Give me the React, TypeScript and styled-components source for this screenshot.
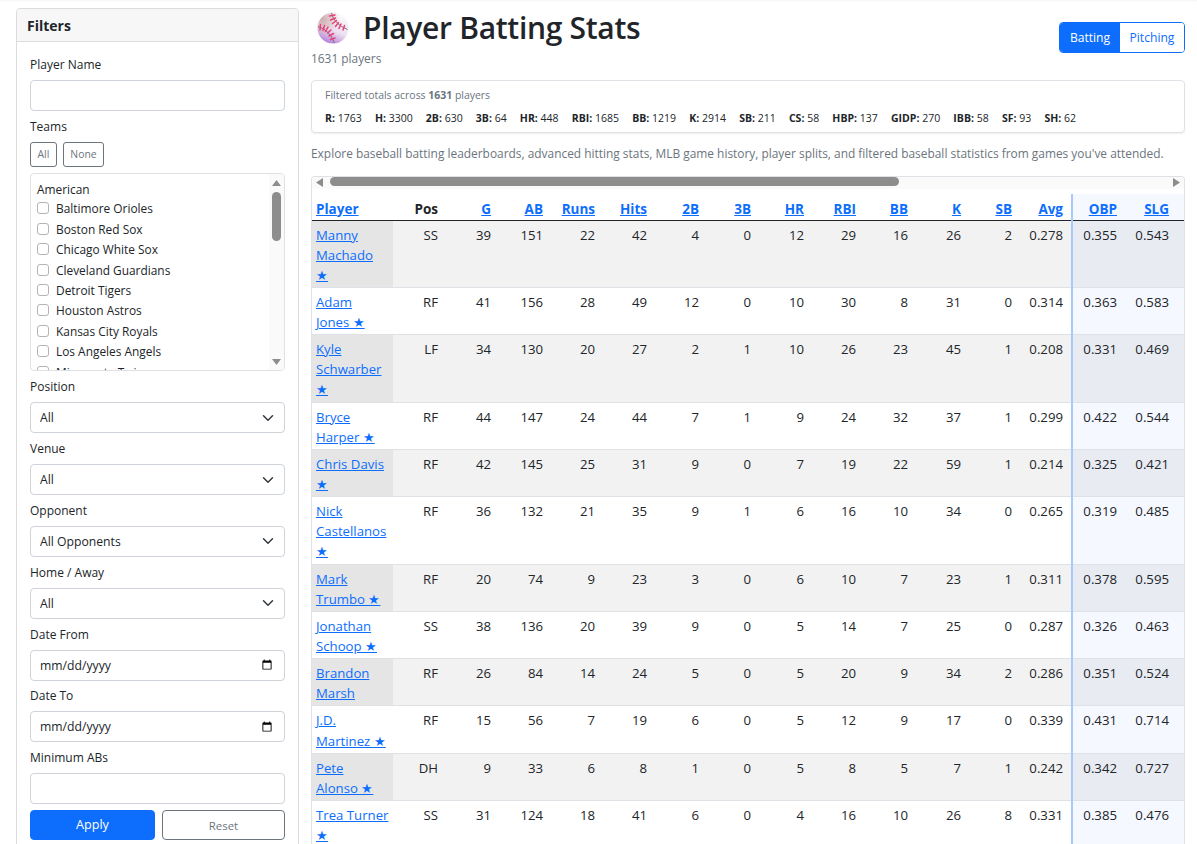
import React from 'react'
import styled, { createGlobalStyle } from 'styled-components'

const FONT = '"Open Sans", "Noto Sans", sans-serif'
const BLUE = '#0d6efd'
const GREY = '#6c757d'

const GlobalStyle = createGlobalStyle`
    html, body {
        margin: 0;
        height: 100%;
        overflow: hidden;
        background: #fff;
    }
    body {
        font-family: ${FONT};
        font-size: 13px;
        color: #212529;
    }
    * {
        box-sizing: border-box;
    }
`

const Page = styled.div`
    display: grid;
    grid-template-columns: 283px 874px;
    column-gap: 12px;
    padding: 8px 12px 0 16px;
    height: 844px;
    overflow: hidden;
    box-shadow: inset 0 2px 2px -1px #f4f4f4;
`

/* sidebar */
const Sidebar = styled.aside`
    border: 1px solid #dcdcdc;
    border-radius: 4px;
    height: 900px;
`

const SidebarHeader = styled.div`
    height: 33px;
    padding: 0 10px;
    display: flex;
    align-items: center;
    background: #f7f7f7;
    border-bottom: 1px solid #dcdcdc;
    border-radius: 4px 4px 0 0;
    font-size: 14px;
    font-weight: 700;
`

const SidebarBody = styled.div`
    padding: 13px 13px 0;
`

const Field = styled.div`
    margin-bottom: 5.8px;
`

const Label = styled.label`
    display: block;
    height: 19px;
    line-height: 19px;
    margin-bottom: 6px;
    font-size: 12px;
`

const TextInput = styled.input`
    display: block;
    width: 100%;
    height: 31px;
    padding: 0 9px;
    border: 1px solid #ced4da;
    border-radius: 4px;
    background: #fff;
    font-family: ${FONT};
    font-size: 12.2px;
    color: #212529;
    outline: none;

    &::-webkit-datetime-edit-fields-wrapper,
    &::-webkit-datetime-edit-month-field,
    &::-webkit-datetime-edit-day-field,
    &::-webkit-datetime-edit-year-field,
    &::-webkit-datetime-edit-text {
        padding: 0;
    }
`

const Select = styled.select`
    display: block;
    width: 100%;
    height: 31px;
    padding: 0 30px 0 9px;
    appearance: none;
    border: 1px solid #ced4da;
    border-radius: 4px;
    background-color: #fff;
    background-image: url("data:image/svg+xml,%3csvg xmlns='http://www.w3.org/2000/svg' viewBox='0 0 16 16'%3e%3cpath fill='none' stroke='%23343a40' stroke-linecap='round' stroke-linejoin='round' stroke-width='2' d='m2 5 6 6 6-6'/%3e%3c/svg%3e");
    background-repeat: no-repeat;
    background-position: right 10px center;
    background-size: 12px 12px;
    font-family: ${FONT};
    font-size: 12.2px;
    color: #212529;
`

const MiniButtons = styled.div`
    display: flex;
    gap: 6px;
    margin-bottom: 6px;
`

const MiniButton = styled.button`
    height: 25px;
    padding: 0 6.5px;
    border: 1px solid ${GREY};
    border-radius: 3px;
    background: #fff;
    color: ${GREY};
    font-family: ${FONT};
    font-size: 10.4px;
`

const TeamBox = styled.div`
    display: flex;
    height: 198px;
    margin-bottom: 6.6px;
    border: 1px solid #dee2e6;
    border-radius: 4px;
    overflow: hidden;
`

const TeamList = styled.div`
    flex: 1;
    padding: 6px 6px 0;
    overflow: hidden;
`

const TeamGroup = styled.div`
    height: 18.3px;
    line-height: 18px;
    font-size: 11.9px;
`

const TeamRow = styled.label`
    display: flex;
    align-items: center;
    gap: 7px;
    height: 20.43px;
    font-size: 11.9px;
    white-space: nowrap;
`

const TeamCheck = styled.span`
    flex: none;
    width: 12px;
    height: 12px;
    border: 1px solid #b4b4b4;
    border-radius: 3px;
    background: #fff;
`

const TeamScroll = styled.div`
    flex: none;
    width: 15px;
    padding: 6px 3px 5px;
    display: flex;
    flex-direction: column;
    align-items: center;
    background: #fafafa;
`

const TeamThumb = styled.div`
    width: 9px;
    height: 49px;
    margin-top: 6px;
    border-radius: 5px;
    background: #8d8d8d;
`

const ArrowDownWrap = styled.div`
    margin-top: auto;
    line-height: 0;
`

const SubmitRow = styled.div`
    display: grid;
    grid-template-columns: 125px 123px;
    column-gap: 7px;
`

const ApplyButton = styled.button`
    height: 30px;
    border: 1px solid ${BLUE};
    border-radius: 4px;
    background: ${BLUE};
    color: #fff;
    font-family: ${FONT};
    font-size: 12.6px;
    font-weight: 500;
`

const ResetButton = styled.button`
    height: 30px;
    padding-top: 2px;
    border: 1px solid ${GREY};
    border-radius: 4px;
    background: #fff;
    color: ${GREY};
    font-family: ${FONT};
    font-size: 11.4px;
`

/* main */
const Main = styled.main`
    min-width: 0;
`

const TopBar = styled.div`
    display: flex;
    justify-content: space-between;
    align-items: flex-start;
`

const Title = styled.h1`
    display: flex;
    align-items: center;
    margin: 0;
    height: 39px;
    font-size: 30px;
    font-weight: 600;
    line-height: 39px;
    letter-spacing: -0.3px;
`

const Ball = styled.svg`
    width: 32px;
    height: 32px;
    margin: 1px 14px 0 6px;
`

const Players = styled.div`
    height: 21px;
    line-height: 23px;
    font-size: 11.9px;
    color: ${GREY};
`

const ModeGroup = styled.div`
    display: flex;
    margin-top: 14px;
    height: 31px;
    border: 1px solid ${BLUE};
    border-radius: 4px;
    overflow: hidden;
`

const ModeButton = styled.button`
    width: ${p => p.$w}px;
    padding: 0;
    border: 0;
    background: ${p => (p.$active ? BLUE : '#fff')};
    color: ${p => (p.$active ? '#fff' : BLUE)};
    font-family: ${FONT};
    font-size: 12.1px;
`

const TotalsCard = styled.div`
    height: 53px;
    margin-top: 12px;
    padding: 6px 13px 0;
    border: 1px solid #dee2e6;
    border-radius: 4px;
    box-shadow: 0 1px 2px rgba(0, 0, 0, 0.07);
`

const TotalsTitle = styled.div`
    height: 17px;
    line-height: 17px;
    font-size: 10.45px;
    color: ${GREY};
`

const TotalsRow = styled.div`
    display: flex;
    gap: 13.2px;
    margin-top: 6px;
    line-height: 17px;
    font-size: 10.5px;
`

const Intro = styled.p`
    margin: 10px 0 13px;
    height: 20px;
    line-height: 20px;
    font-size: 11.92px;
    color: ${GREY};
    white-space: nowrap;
`

const TableBox = styled.div`
    border: 1px solid #dee2e6;
    border-bottom: 0;
    border-radius: 4px 4px 0 0;
    overflow: hidden;
`

const ScrollTrack = styled.div`
    display: flex;
    align-items: flex-start;
    height: 12px;
    padding: 1px 4px 0;
    margin-bottom: 5px;
    background: #fafafa;
`

const ScrollThumb = styled.div`
    width: 569px;
    height: 9px;
    margin-top: -1px;
    margin-left: 7px;
    border-radius: 5px;
    background: #8d8d8d;
`

const RightArrowWrap = styled.div`
    margin-left: auto;
    line-height: 0;
`

const Table = styled.table`
    table-layout: fixed;
    width: 924px;
    border-collapse: collapse;
    font-size: 13.2px;
    line-height: 20.14px;
`

const Th = styled.th`
    height: 26px;
    padding: 4px ${p => p.$pr ?? 4}px 0 4px;
    text-align: ${p => (p.$left ? 'left' : 'right')};
    border-bottom: 1px solid #212529;
    font-size: 13.5px;
    font-weight: 700;
    background: ${p => (p.$rate ? '#f5f8ff' : '#fff')};
    ${p => p.$first && 'border-left: 2px solid #a8c9fc;'}

    a {
        color: ${BLUE};
    }
`

const Td = styled.td`
    padding: 4px ${p => p.$pr ?? 4}px 2px 4px;
    text-align: right;
    vertical-align: top;
    border-bottom: 1px solid #dee2e6;
    background: ${p => (p.$rate ? (p.$odd ? '#e8ebf2' : '#f5f8ff') : p.$odd ? '#f2f2f2' : '#fff')};
    ${p => p.$first && 'border-left: 2px solid #a8c9fc;'}
`

const NameCell = styled.td`
    padding: 4px 4px 2px;
    text-align: left;
    vertical-align: top;
    border-bottom: 1px solid #dee2e6;
    background: ${p => (p.$odd ? '#e5e5e5' : '#fff')};
    white-space: nowrap;

    a {
        color: ${BLUE};
    }
`

const widths = [81, 49, 53, 52, 52, 52, 52, 52, 53, 52, 52, 53, 51, 56, 49, 52, 52]

const teams = [
    'Baltimore Orioles', 'Boston Red Sox', 'Chicago White Sox', 'Cleveland Guardians', 'Detroit Tigers',
    'Houston Astros', 'Kansas City Royals', 'Los Angeles Angels', 'Minnesota Twins',
]

const totals: [string, number][] = [
    ['R', 1763], ['H', 3300], ['2B', 630], ['3B', 64], ['HR', 448], ['RBI', 1685], ['BB', 1219], ['K', 2914],
    ['SB', 211], ['CS', 58], ['HBP', 137], ['GIDP', 270], ['IBB', 58], ['SF', 93], ['SH', 62],
]

const headers = ['G', 'AB', 'Runs', 'Hits', '2B', '3B', 'HR', 'RBI', 'BB', 'K', 'SB', 'Avg']

type Player = { name: string[]; pos: string; stats: (number | string)[]; obp: string; slg: string }

const players: Player[] = [
    { name: ['Manny', 'Machado', '★'], pos: 'SS', stats: [39, 151, 22, 42, 4, 0, 12, 29, 16, 26, 2, '0.278'], obp: '0.355', slg: '0.543' },
    { name: ['Adam', 'Jones ★'], pos: 'RF', stats: [41, 156, 28, 49, 12, 0, 10, 30, 8, 31, 0, '0.314'], obp: '0.363', slg: '0.583' },
    { name: ['Kyle', 'Schwarber', '★'], pos: 'LF', stats: [34, 130, 20, 27, 2, 1, 10, 26, 23, 45, 1, '0.208'], obp: '0.331', slg: '0.469' },
    { name: ['Bryce', 'Harper ★'], pos: 'RF', stats: [44, 147, 24, 44, 7, 1, 9, 24, 32, 37, 1, '0.299'], obp: '0.422', slg: '0.544' },
    { name: ['Chris Davis', '★'], pos: 'RF', stats: [42, 145, 25, 31, 9, 0, 7, 19, 22, 59, 1, '0.214'], obp: '0.325', slg: '0.421' },
    { name: ['Nick', 'Castellanos', '★'], pos: 'RF', stats: [36, 132, 21, 35, 9, 1, 6, 16, 10, 34, 0, '0.265'], obp: '0.319', slg: '0.485' },
    { name: ['Mark', 'Trumbo ★'], pos: 'RF', stats: [20, 74, 9, 23, 3, 0, 6, 10, 7, 23, 1, '0.311'], obp: '0.378', slg: '0.595' },
    { name: ['Jonathan', 'Schoop ★'], pos: 'SS', stats: [38, 136, 20, 39, 9, 0, 5, 14, 7, 25, 0, '0.287'], obp: '0.326', slg: '0.463' },
    { name: ['Brandon', 'Marsh'], pos: 'RF', stats: [26, 84, 14, 24, 5, 0, 5, 20, 9, 34, 2, '0.286'], obp: '0.351', slg: '0.524' },
    { name: ['J.D.', 'Martinez ★'], pos: 'RF', stats: [15, 56, 7, 19, 6, 0, 5, 12, 9, 17, 0, '0.339'], obp: '0.431', slg: '0.714' },
    { name: ['Pete', 'Alonso ★'], pos: 'DH', stats: [9, 33, 6, 8, 1, 0, 5, 8, 5, 7, 1, '0.242'], obp: '0.342', slg: '0.727' },
    { name: ['Trea Turner', '★'], pos: 'SS', stats: [31, 124, 18, 41, 6, 0, 4, 16, 10, 26, 8, '0.331'], obp: '0.385', slg: '0.476' },
]

const Triangle = ({ dir }: { dir: 'up' | 'down' | 'left' | 'right' }) => {
    const points = {
        up: '0,6 4.5,0 9,6',
        down: '0,0 9,0 4.5,6',
        left: '7,0 7,9 0,4.5',
        right: '0,0 7,4.5 0,9',
    }[dir]
    const vertical = dir === 'up' || dir === 'down'
    return (
        <svg width={vertical ? 9 : 7} height={vertical ? 6 : 9} style={{ flex: 'none' }}>
            <polygon points={points} fill="#8d8d8d" />
        </svg>
    )
}

const BaseballIcon = () => (
    <Ball viewBox="0 0 32 32">
        <defs>
            <linearGradient id="ballBase" x1="0.7" y1="0.05" x2="0.3" y2="1">
                <stop offset="0" stopColor="#fbf9fa" />
                <stop offset="0.55" stopColor="#ece0f0" />
                <stop offset="1" stopColor="#b27cd6" />
            </linearGradient>
            <radialGradient id="ballShade" cx="0.15" cy="0.2" r="0.55">
                <stop offset="0" stopColor="#c4a3a0" stopOpacity="0.85" />
                <stop offset="1" stopColor="#c4a3a0" stopOpacity="0" />
            </radialGradient>
        </defs>
        <circle cx="16" cy="16" r="15.5" fill="url(#ballBase)" />
        <circle cx="16" cy="16" r="15.5" fill="url(#ballShade)" />
        <path d="M14.5 1 Q17 12 30.5 17.5" fill="none" stroke="#6b5560" strokeWidth="0.8" />
        <path d="M1 14.5 Q12 17.5 17.5 31" fill="none" stroke="#6b5560" strokeWidth="0.8" />
        <path
            d="M12.5 4 L18 3 M13.5 8 L18.5 6 M15.5 11.5 L19.5 8.5 M18.5 14.5 L21.5 10.5 M22 16.5 L24 12 M26 18 L27.5 13.5 M3.5 12.5 L3 18 M7.5 13.5 L6 18.5 M11 15 L8.5 19.5 M14 18 L10.5 21 M16.5 21.5 L12 24 M18 26 L13.5 27.5"
            fill="none"
            stroke="#ec3f78"
            strokeWidth="1.5"
            strokeLinecap="round"
        />
    </Ball>
)

const App = () => (
    <Page>
        <GlobalStyle />
        <Sidebar>
            <SidebarHeader>Filters</SidebarHeader>
            <SidebarBody>
                <Field>
                    <Label>Player Name</Label>
                    <TextInput type="text" />
                </Field>
                <Label>Teams</Label>
                <MiniButtons>
                    <MiniButton>All</MiniButton>
                    <MiniButton>None</MiniButton>
                </MiniButtons>
                <TeamBox>
                    <TeamList>
                        <TeamGroup>American</TeamGroup>
                        {teams.map(team => (
                            <TeamRow key={team}>
                                <TeamCheck />
                                {team}
                            </TeamRow>
                        ))}
                    </TeamList>
                    <TeamScroll>
                        <Triangle dir="up" />
                        <TeamThumb />
                        <ArrowDownWrap>
                            <Triangle dir="down" />
                        </ArrowDownWrap>
                    </TeamScroll>
                </TeamBox>
                <Field>
                    <Label>Position</Label>
                    <Select><option>All</option></Select>
                </Field>
                <Field>
                    <Label>Venue</Label>
                    <Select><option>All</option></Select>
                </Field>
                <Field>
                    <Label>Opponent</Label>
                    <Select><option>All Opponents</option></Select>
                </Field>
                <Field>
                    <Label>Home / Away</Label>
                    <Select><option>All</option></Select>
                </Field>
                <Field>
                    <Label>Date From</Label>
                    <TextInput type="date" />
                </Field>
                <Field>
                    <Label>Date To</Label>
                    <TextInput type="date" />
                </Field>
                <Field>
                    <Label>Minimum ABs</Label>
                    <TextInput type="text" />
                </Field>
                <SubmitRow>
                    <ApplyButton>Apply</ApplyButton>
                    <ResetButton>Reset</ResetButton>
                </SubmitRow>
            </SidebarBody>
        </Sidebar>
        <Main>
            <TopBar>
                <div>
                    <Title><BaseballIcon />Player Batting Stats</Title>
                    <Players>1631 players</Players>
                </div>
                <ModeGroup>
                    <ModeButton $active $w={60}>Batting</ModeButton>
                    <ModeButton $w={64}>Pitching</ModeButton>
                </ModeGroup>
            </TopBar>
            <TotalsCard>
                <TotalsTitle>Filtered totals across <b>1631</b> players</TotalsTitle>
                <TotalsRow>
                    {totals.map(([label, value]) => (
                        <span key={label}><b>{label}:</b> {value}</span>
                    ))}
                </TotalsRow>
            </TotalsCard>
            <Intro>
                Explore baseball batting leaderboards, advanced hitting stats, MLB game history, player splits, and filtered baseball statistics from games you've attended.
            </Intro>
            <TableBox>
                <ScrollTrack>
                    <Triangle dir="left" />
                    <ScrollThumb />
                    <RightArrowWrap>
                        <Triangle dir="right" />
                    </RightArrowWrap>
                </ScrollTrack>
                <Table>
                    <colgroup>
                        {widths.map((w, i) => <col key={i} width={w} />)}
                        <col width={52} />
                    </colgroup>
                    <thead>
                        <tr>
                            <Th $left><a href="#player">Player</a></Th>
                            <Th>Pos</Th>
                            {headers.map(h => (
                                <Th key={h} $pr={h === 'Avg' ? 8 : 4}><a href={`#${h}`}>{h}</a></Th>
                            ))}
                            <Th $rate $first><a href="#obp">OBP</a></Th>
                            <Th $rate><a href="#slg">SLG</a></Th>
                            <Th $rate />
                        </tr>
                    </thead>
                    <tbody>
                        {players.map((p, i) => {
                            const odd = i % 2 === 0
                            return (
                                <tr key={p.name.join(' ')}>
                                    <NameCell $odd={odd}>
                                        <a href="#p">
                                            {p.name.map((line, j) => (
                                                <React.Fragment key={j}>{j > 0 && <br />}{line}</React.Fragment>
                                            ))}
                                        </a>
                                    </NameCell>
                                    <Td $odd={odd}>{p.pos}</Td>
                                    {p.stats.map((s, j) => (
                                        <Td key={j} $odd={odd} $pr={j === 11 ? 8 : 4}>{s}</Td>
                                    ))}
                                    <Td $odd={odd} $rate $first>{p.obp}</Td>
                                    <Td $odd={odd} $rate>{p.slg}</Td>
                                    <Td $odd={odd} $rate />
                                </tr>
                            )
                        })}
                    </tbody>
                </Table>
            </TableBox>
        </Main>
    </Page>
)

export default App
